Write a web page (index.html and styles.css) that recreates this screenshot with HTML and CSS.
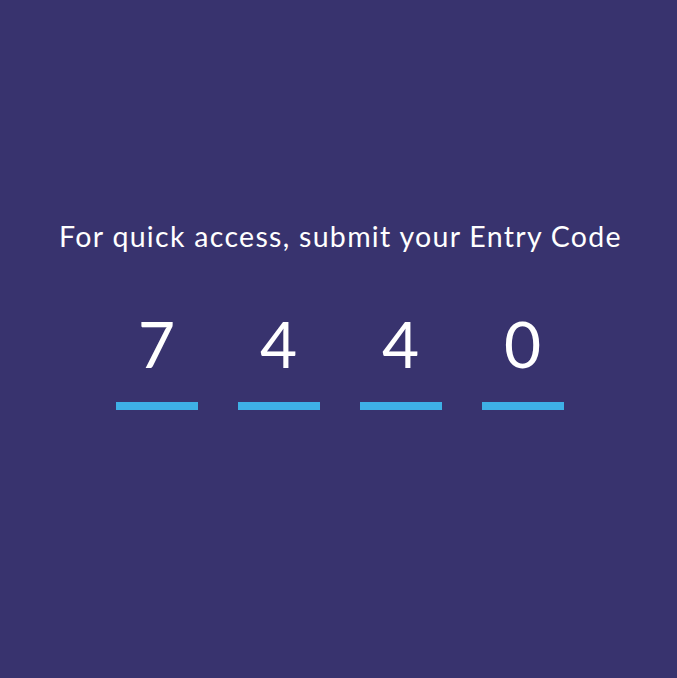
FILE: index.html
```html
<!DOCTYPE html>
<html>
<head>
<meta charset="utf-8">
<link rel="stylesheet" href="styles.css">
</head>
<body>
<main class="screen">
  <p class="prompt">For quick access, submit your Entry Code</p>
  <div class="code">
    <div class="cell"><span class="digit">7</span><span class="bar"></span></div>
    <div class="cell"><span class="digit">4</span><span class="bar"></span></div>
    <div class="cell"><span class="digit">4</span><span class="bar"></span></div>
    <div class="cell"><span class="digit">0</span><span class="bar"></span></div>
  </div>
</main>
</body>
</html>
```
FILE: styles.css
```css
html, body {
  margin: 0;
  padding: 0;
  background: #38336e;
}
.screen {
  width: 677px;
  height: 678px;
  display: flex;
  flex-direction: column;
  align-items: center;
  padding-top: 218px;
  box-sizing: border-box;
  font-family: Lato, "Noto Sans", sans-serif;
  color: #ffffff;
}
.prompt {
  margin: 0 0 0 4px;
  font-size: 28.5px;
  line-height: 36px;
  font-weight: 400;
  letter-spacing: 1.3px;
}
.code {
  display: flex;
  gap: 40px;
  margin-top: 54px;
  margin-left: 2px;
}
.cell {
  display: flex;
  flex-direction: column;
  align-items: center;
  width: 82px;
}
.digit {
  font-size: 64px;
  line-height: 72px;
  font-weight: 400;
}
.bar {
  display: block;
  width: 82px;
  height: 8px;
  margin-top: 22px;
  background: #3eb0e6;
}
```
